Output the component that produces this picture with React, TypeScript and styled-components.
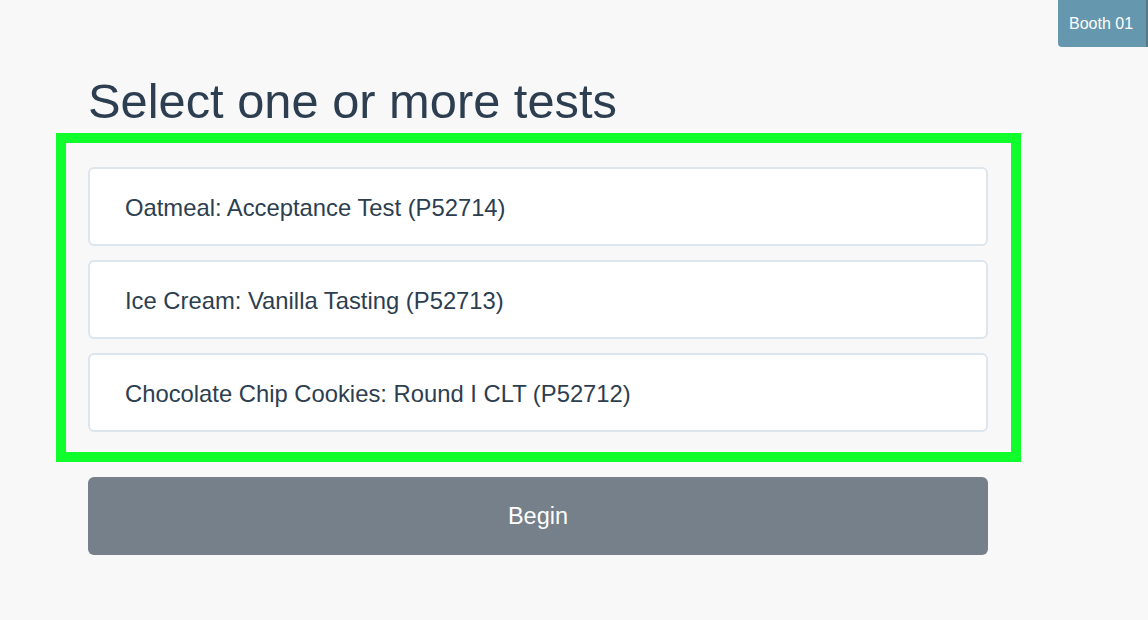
import React from "react";
import styled, { createGlobalStyle } from "styled-components";

const GlobalStyle = createGlobalStyle`
  html, body {
    margin: 0;
    padding: 0;
    background: #f8f8f8;
    font-family: "Liberation Sans", Arial, sans-serif;
  }
  * { box-sizing: border-box; }
`;

const Page = styled.div`
  position: relative;
  width: 1148px;
  height: 620px;
  background: #f8f8f8;
  overflow: hidden;
`;

const BoothBadge = styled.div`
  position: absolute;
  top: 0;
  right: 0;
  width: 90px;
  height: 47px;
  display: flex;
  align-items: center;
  justify-content: center;
  padding-right: 2px;
  background: #6597ae;
  border-right: 2px solid #5a7682;
  border-bottom-left-radius: 4px;
  color: #ffffff;
  font-size: 16px;
`;

const Content = styled.main`
  width: 900px;
  margin-left: 88px;
  padding-top: 79px;
  display: flex;
  flex-direction: column;
`;

const Title = styled.h1`
  margin: 0;
  font-size: 48.8px;
  line-height: 45px;
  font-weight: 400;
  color: #2c3e50;
`;

const TestList = styled.div`
  margin: 9px -33px 0 -32px;
  padding: 24px 23px 20px 22px;
  border: 10px solid #10ff2c;
  display: flex;
  flex-direction: column;
  gap: 14px;
`;

const TestCard = styled.button`
  height: 79px;
  width: 100%;
  display: flex;
  align-items: center;
  padding: 2px 35px 0;
  background: #ffffff;
  border: 2px solid #dde5ed;
  border-radius: 6px;
  color: #2c3e50;
  font-family: "Liberation Sans", Arial, sans-serif;
  font-size: 23.8px;
  text-align: left;
  cursor: pointer;
`;

const BeginButton = styled.button`
  margin-top: 15px;
  height: 78px;
  width: 100%;
  border: none;
  border-radius: 6px;
  background: #75808b;
  color: #ffffff;
  font-family: "Liberation Sans", Arial, sans-serif;
  font-size: 23.5px;
  cursor: pointer;
`;

const tests = [
  "Oatmeal: Acceptance Test (P52714)",
  "Ice Cream: Vanilla Tasting (P52713)",
  "Chocolate Chip Cookies: Round I CLT (P52712)",
];

export default function App() {
  return (
    <Page>
      <GlobalStyle />
      <BoothBadge>Booth 01</BoothBadge>
      <Content>
        <Title>Select one or more tests</Title>
        <TestList>
          {tests.map((t) => (
            <TestCard key={t}>{t}</TestCard>
          ))}
        </TestList>
        <BeginButton>Begin</BeginButton>
      </Content>
    </Page>
  );
}
